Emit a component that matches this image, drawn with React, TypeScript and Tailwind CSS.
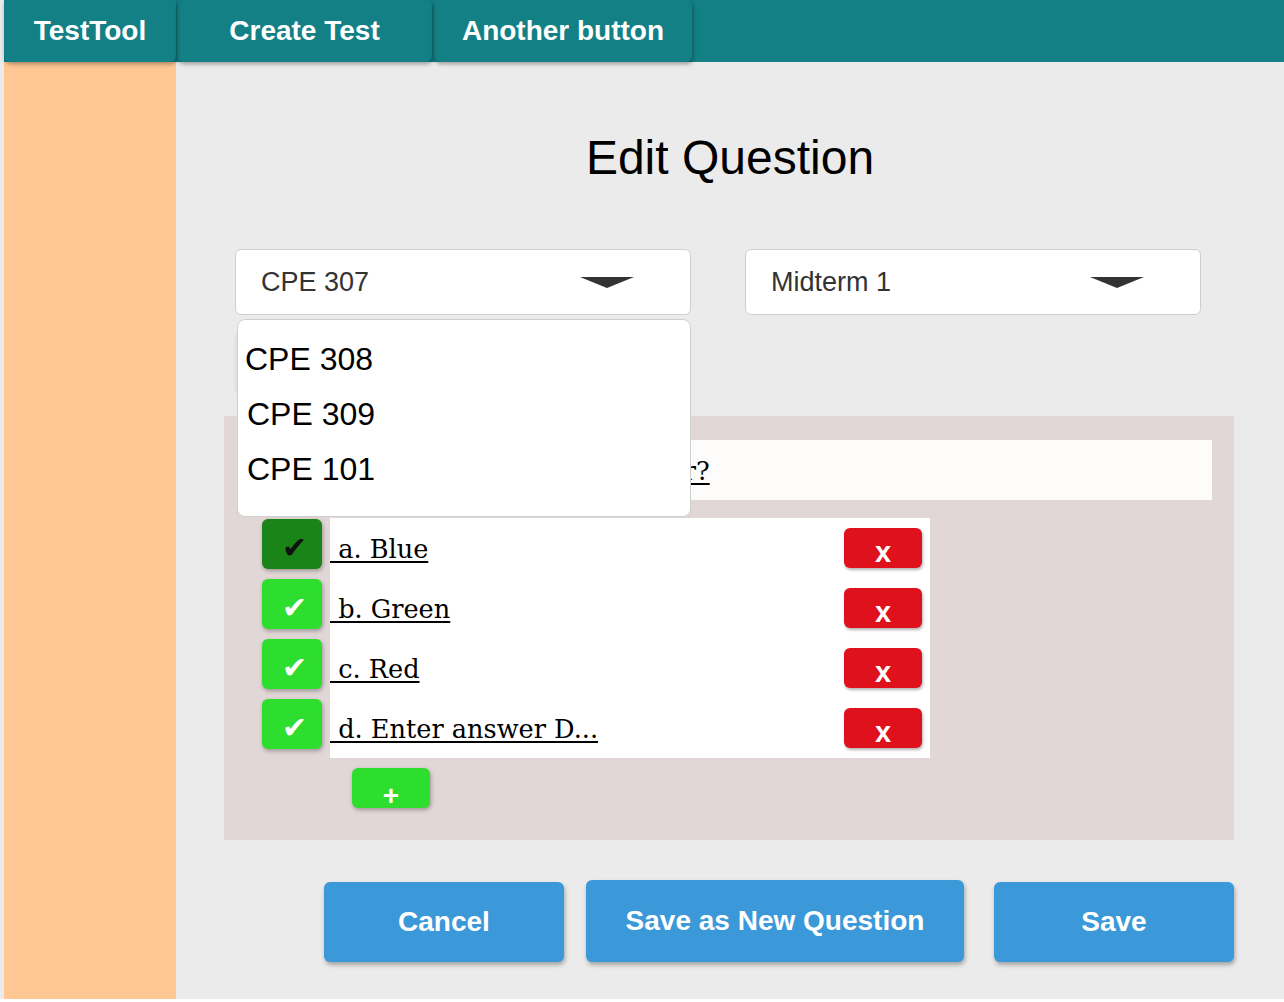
import React from "react";

const sans = { fontFamily: '"Liberation Sans", Arial, sans-serif' };
const serif = { fontFamily: '"DejaVu Serif", serif' };

function Arrow() {
  return (
    <svg width="54" height="11" viewBox="0 0 54 11">
      <polygon points="0,0 54,0 27,11" fill="#333333" />
    </svg>
  );
}

function Select({ label, children }: { label: string; children?: React.ReactNode }) {
  return (
    <div className="relative w-[456px]">
      <div className="h-[66px] bg-white border border-[#cfcfcf] rounded-md flex items-center justify-between pl-[25px] pr-[56px]">
        <span className="text-[27px] text-[#333333]">{label}</span>
        <Arrow />
      </div>
      {children}
    </div>
  );
}

const answers = [
  { text: "a. Blue", on: true },
  { text: "b. Green", on: false },
  { text: "c. Red", on: false },
  { text: "d. Enter answer D...", on: false },
];

export default function App() {
  return (
    <div className="h-[999px] bg-[#ebebeb] pl-[4px] flex flex-col" style={sans}>
      <div className="h-[62px] bg-[#138086] flex items-stretch shrink-0 relative z-10">
        <div className="w-[172px] flex items-center justify-center rounded-b-md shadow-[1px_2px_4px_rgba(0,0,0,0.35)] text-white font-bold text-[28px]">
          TestTool
        </div>
        <div className="w-[255px] ml-[1px] flex items-center justify-center rounded-md shadow-[1px_2px_4px_rgba(0,0,0,0.35)] text-white font-bold text-[28px]">
          Create Test
        </div>
        <div className="w-[258px] ml-[2px] flex items-center justify-center rounded-md shadow-[1px_2px_4px_rgba(0,0,0,0.35)] text-white font-bold text-[28px]">
          Another button
        </div>
      </div>
      <div className="flex flex-1">
        <div className="w-[172px] bg-[#ffc794]" />
        <div className="flex-1 flex flex-col">
          <h1 className="mt-[68px] text-center text-[48px] leading-[55px] text-black">Edit Question</h1>
          <div className="mt-[64px] ml-[59px] flex gap-[54px] relative z-10">
            <Select label="CPE 307">
              <div className="absolute left-[2px] top-[70px] w-[454px] h-[198px] bg-white border border-[#cfcfcf] rounded-lg pt-[12px] text-[32px] leading-[55px] text-black">
                <div className="pl-[7px]">CPE 308</div>
                <div className="pl-[9px]">CPE 309</div>
                <div className="pl-[9px]">CPE 101</div>
              </div>
            </Select>
            <Select label="Midterm 1" />
          </div>
          <div className="mt-[17px] ml-[58px] w-[120px] h-[63px] bg-[#e2e2e2] rounded-md" />
          <div className="mt-[21px] ml-[48px] w-[1010px] h-[424px] bg-[#e0d7d6] pt-[24px]">
            <div className="ml-[16px] w-[972px] h-[60px] bg-[#fdfcfb] pl-[101px] pt-[16px]">
              <div className="text-[25.6px] leading-[30px] text-black underline underline-offset-[3px]" style={serif}>
                {"\u00a0What is your favorite color?"}
              </div>
            </div>
            <div className="mt-[18px] ml-[38px] flex flex-col">
              {answers.map((a) => (
                <div key={a.text} className="flex items-start h-[60px]">
                  <div
                    className={
                      "w-[60px] h-[50px] mt-[1px] rounded-md shadow-[1px_2px_4px_rgba(0,0,0,0.3)] flex items-center justify-center pl-[5px] pt-[7px] text-[30px] leading-none " +
                      (a.on ? "bg-[#1a8418] text-[#111]" : "bg-[#2ede2e] text-white")
                    }
                    style={{ fontFamily: '"DejaVu Sans", sans-serif' }}
                  >
                    ✔
                  </div>
                  <div className="ml-[8px] w-[600px] h-[60px] bg-white flex items-start justify-between">
                    <span className="mt-[16px] text-[25.6px] leading-[30px] text-black underline underline-offset-[3px]" style={serif}>
                      {"\u00a0" + a.text}
                    </span>
                    <div className="mt-[10px] mr-[8px] w-[78px] h-[40px] bg-[#df111d] rounded-md shadow-[1px_2px_3px_rgba(0,0,0,0.3)] flex items-end justify-center text-white font-bold text-[29px] leading-none pb-[1px]">
                      x
                    </div>
                  </div>
                </div>
              ))}
            </div>
            <div className="mt-[10px] ml-[128px] w-[78px] h-[40px] bg-[#2ede2e] rounded-md shadow-[1px_2px_4px_rgba(0,0,0,0.3)] flex items-end justify-center text-white font-bold text-[28px] leading-none">
              <span className="translate-y-[2px]">+</span>
            </div>
          </div>
          <div className="mt-[42px] ml-[148px] flex items-start">
            <div className="w-[240px] h-[80px] bg-[#3b99d9] rounded-md shadow-[1px_3px_4px_rgba(0,0,0,0.3)] flex items-center justify-center text-white font-bold text-[28px]">
              Cancel
            </div>
            <div className="ml-[22px] -mt-[2px] w-[378px] h-[82px] bg-[#3b99d9] rounded-md shadow-[1px_3px_4px_rgba(0,0,0,0.3)] flex items-center justify-center text-white font-bold text-[28px]">
              Save as New Question
            </div>
            <div className="ml-[30px] w-[240px] h-[80px] bg-[#3b99d9] rounded-md shadow-[1px_3px_4px_rgba(0,0,0,0.3)] flex items-center justify-center text-white font-bold text-[28px]">
              Save
            </div>
          </div>
        </div>
      </div>
    </div>
  );
}
